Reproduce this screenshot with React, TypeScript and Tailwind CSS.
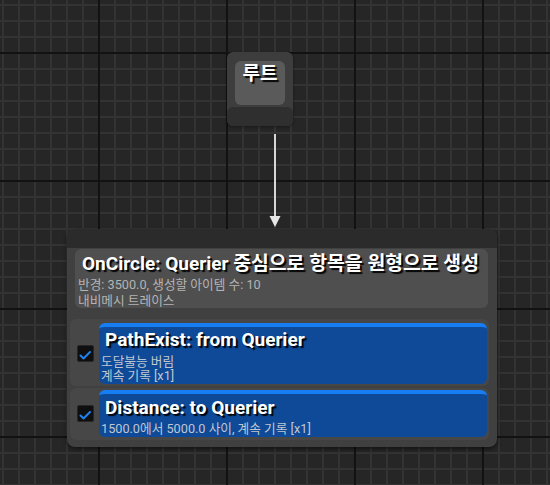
import React from 'react';

interface QueryTest {
  title: string;
  lines: string[];
  rowPad: string;
  cardPad: string;
  subGap: string;
}

const tests: QueryTest[] = [
  {
    title: 'PathExist: from Querier',
    lines: ['도달불능 버림', '계속 기록 [x1]'],
    rowPad: 'pt-[4px] pb-[2px] h-[67px]',
    cardPad: 'pt-[2px]',
    subGap: 'mt-[4px]',
  },
  {
    title: 'Distance: to Querier',
    lines: ['1500.0에서 5000.0 사이, 계속 기록 [x1]'],
    rowPad: 'pt-[2px] pb-[3px] h-[52px]',
    cardPad: 'pt-[3px]',
    subGap: 'mt-[3px]',
  },
];

const GridBackground: React.FC = () => (
  <svg className="absolute inset-0" width="550" height="485">
    <defs>
      <pattern id="minor" width="16" height="16" patternUnits="userSpaceOnUse">
        <rect x="2" y="0" width="2" height="16" fill="#333333" />
        <rect x="0" y="4" width="16" height="2" fill="#333333" />
      </pattern>
      <pattern id="major" width="128" height="128" patternUnits="userSpaceOnUse">
        <rect x="98" y="0" width="2" height="128" fill="#121212" />
        <rect x="0" y="52" width="128" height="2" fill="#121212" />
      </pattern>
    </defs>
    <rect width="550" height="485" fill="url(#minor)" />
    <rect width="550" height="485" fill="url(#major)" />
  </svg>
);

const CheckBox: React.FC = () => (
  <div className="w-[17px] h-[17px] shrink-0 rounded-[2px] bg-[#0f0f0f] border border-[#262626]">
    <svg width="15" height="15" viewBox="0 0 15 15">
      <polyline
        points="2.5,9.5 5.5,12.5 12,6"
        fill="none"
        stroke="#1f80ee"
        strokeWidth="2"
        strokeLinecap="round"
        strokeLinejoin="round"
      />
    </svg>
  </div>
);

export default function App() {
  const shadow = '[text-shadow:2px_2px_1px_rgba(0,0,0,0.95)]';

  return (
    <div className="relative w-[550px] h-[485px] overflow-hidden bg-[#262626] font-[Roboto,'Noto_Sans_CJK_KR',sans-serif]">
      <GridBackground />

      {/* Root node */}
      <div className="absolute left-[227px] top-[52px] w-[66px] h-[74px] rounded-md bg-[#3d3d3d] flex flex-col overflow-hidden shadow-[0_1px_3px_rgba(0,0,0,0.4)]">
        <div className="px-2 pt-[9px] pb-[2px]">
          <div className="h-[44px] rounded-md bg-[#5a5a5a] flex justify-center">
            <span className={`text-white font-bold text-[19px] leading-[25px] ${shadow}`}>루트</span>
          </div>
        </div>
        <div className="flex-1 bg-[#2f2f2f] rounded-t-md" />
      </div>

      {/* Connection arrow */}
      <svg className="absolute left-[268px] top-[130px]" width="14" height="100">
        <line x1="7" y1="4" x2="7" y2="88" stroke="#d6d6d6" strokeWidth="2" />
        <polygon points="1.5,86 12.5,86 7,97" fill="#e6e6e6" />
      </svg>

      {/* EQS generator node */}
      <div className="absolute left-[67px] top-[229px] w-[430px] h-[218px] rounded-lg bg-[#404040] flex flex-col overflow-hidden shadow-[0_2px_4px_rgba(0,0,0,0.5)]">
        <div className="h-[19px] bg-[#2b2b2b]" />

        <div className="ml-[8px] mr-[9px] mt-[1px] h-[59px] rounded-md bg-[#4f4f4f] pl-[3px] pt-[4px]">
          <div className={`ml-[4px] text-white font-bold text-[19px] leading-[22px] whitespace-nowrap ${shadow}`}>
            OnCircle: Querier <span className="text-[19.35px]">중심으로 항목을 원형으로 생성</span>
          </div>
          <div className="mt-[2px] text-[12.7px] leading-[16px] text-[#b4b4b4]">
            <div>반경: 3500.0, 생성할 아이템 수: 10</div>
            <div>내비메시 트레이스</div>
          </div>
        </div>

        <div className="mt-[11px] ml-[3px] mr-[8px] flex flex-col gap-[2px]">
          {tests.map((t) => (
            <div key={t.title} className={`flex items-center gap-[5px] pl-[7px] pr-[2px] rounded-md bg-[#474747] ${t.rowPad}`}>
              <CheckBox />
              <div className={`flex-1 h-full rounded-md bg-[#0e4a98] border-t-4 border-[#167df2] pl-[2px] ${t.cardPad}`}>
                <div className={`ml-[4px] text-white font-bold text-[19px] leading-[22px] whitespace-nowrap ${shadow}`}>
                  {t.title}
                </div>
                <div className={`text-[12.7px] leading-[14px] text-[#c0c7d2] ${t.subGap}`}>
                  {t.lines.map((l) => (
                    <div key={l}>{l}</div>
                  ))}
                </div>
              </div>
            </div>
          ))}
        </div>
      </div>
    </div>
  );
}
